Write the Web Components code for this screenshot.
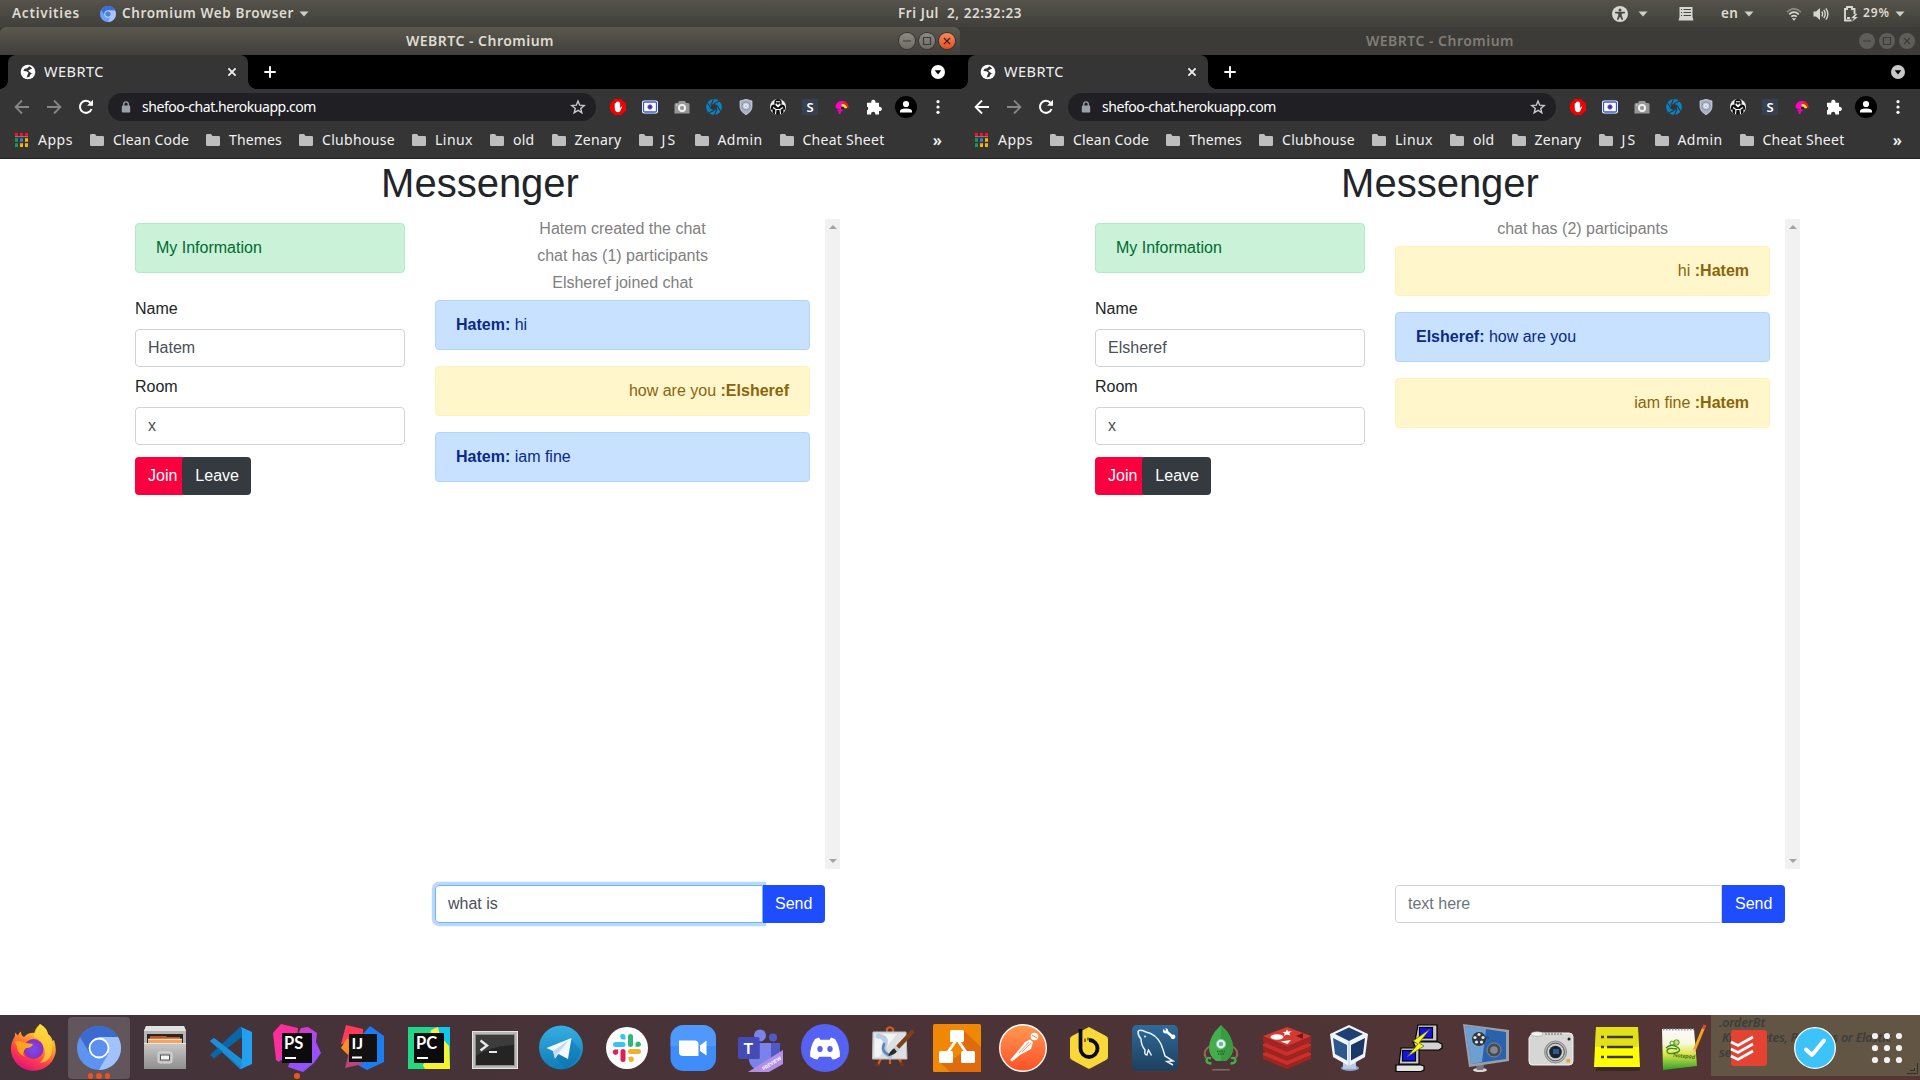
<!DOCTYPE html>
<html lang="en">
<head>
<meta charset="utf-8">
<title>WEBRTC</title>
<style>
html,body{margin:0;height:100%;overflow:hidden;background:#3c3b37}
body{font-family:"Noto Sans","Open Sans",sans-serif}
</style>
</head>
<body>
<desk-top></desk-top>
<script>
const define = (name, html, setup) => customElements.define(name, class extends HTMLElement {
  connectedCallback() {
    if (this.shadowRoot) return;
    const root = this.attachShadow({mode: 'open'});
    root.innerHTML = typeof html === 'function' ? html(this) : html;
    if (setup) setup(this, root);
  }
});

/* single-line label tracked so that it fills the width given in "w" */
define('fit-text', el => `<style>:host{display:inline-block;white-space:pre;flex:none;width:${el.getAttribute('w')}px}span{display:inline-block}</style><span><slot></slot></span>`,
  (el, root) => {
    const s = root.querySelector('span');
    const n = el.textContent.length;
    const d = (+el.getAttribute('w') - s.getBoundingClientRect().width) / n;
    s.style.letterSpacing = d.toFixed(3) + 'px';
  });

/* ---------- small icons ---------- */
const ICONS = {
  chromium: [16, `<circle cx="8" cy="8" r="8" fill="#6ea0f5"/><path d="M1.1 4A8 8 0 0 1 14.9 4L15 4.5H8L4.9 9.5Z" fill="#3c6fd6"/><path d="M15 4.5A8 8 0 0 1 8 16L11.2 9.6A3.6 3.6 0 0 0 8 4.4Z" fill="#a9c7fa"/><circle cx="8" cy="8" r="3.3" fill="#4a80ea" stroke="#dce8ff" stroke-width=".9"/>`],
  caret: [10, `<path d="M.5 2.6h9L5 7.4Z" fill="#d0cec8"/>`],
  access: [16, `<circle cx="8" cy="8" r="8" fill="#d8d6d0"/><circle cx="8" cy="3.9" r="1.5" fill="#4a4842"/><path d="M3 5.8h10v1.4l-3.3.6.2 2 1.2 3.6-1.3.5L8 10.7l-1.8 3.2-1.3-.5 1.2-3.6.2-2L3 7.2Z" fill="#4a4842"/>`],
  list: [16, `<path d="M1.500 1h13V11L15.500 14.500H.5L1.500 11Z" fill="#d8d6d0"/><path d="M3 3.500h1M5.500 3.500H13M3 6.500h1M5.500 6.500H13M3 9.500h1M5.500 9.500H13" stroke="#4a4842" stroke-width="1"/>`],
  wifi: [16, `<g fill="none" stroke-width="1.7"><path d="M1 6.1Q8-.6 15 6.1" stroke="#8b8881"/><path d="M3.2 8.4Q8 4 12.8 8.4" stroke="#d8d6d0"/><path d="M5.3 10.7Q8 8.4 10.7 10.7" stroke="#d8d6d0"/></g><path d="M5.8 12.2h4.4L8 14.8Z" fill="#d8d6d0"/>`],
  volume: [16, `<path d="M.5 5.5H3L7 2v12L3 10.5H.5Z" fill="#d8d6d0"/><g fill="none" stroke="#d8d6d0" stroke-width="1.4"><path d="M8.800 5.500q1.600 2.500 0 5M10.800 3.900q2.800 4.100 0 8.200M12.900 2.300q4 5.700 0 11.400"/></g>`],
  battery: [16, `<path d="M8.500 14.500H2V3h2V1h5v2h2.500v5" fill="none" stroke="#d8d6d0" stroke-width="1.900"/><path d="M4 11h3v2H4Z" fill="#d8d6d0"/><path d="M12.600 7.500 8 12.200h3.100L8.600 16 15 11h-3.200L14.300 8Z" fill="#d8d6d0"/>`],
  globe: [16, `<circle cx="8" cy="8" r="7.3" fill="#fff"/><path d="M9.200 2.200 7.300 4.300 4.600 4.700 3.400 7 6.500 7.300 8.400 8.600 7.800 10.300 6.600 13.600 9.600 12.700 10.200 10.800 12 9.500 9.600 8 8.200 6.600 10 5.500 12.300 4.500Z" fill="#333"/>`],
  close: [10, `<path d="M1.400 1.400 8.600 8.600M8.600 1.400 1.400 8.600" stroke="#f2f2f2" stroke-width="1.800"/>`],
  plus: [12, `<path d="M6 .3v11.400M.3 6h11.400" stroke="#fff" stroke-width="1.900"/>`],
  down: [14, `<circle cx="7" cy="7" r="7" fill="currentColor"/><path d="M3.700 5.200h6.600L7 9.400Z" fill="#000"/>`],
  back: [16, `<path d="M15 8H2M8 1.500 1.600 8 8 14.500" fill="none" stroke="currentColor" stroke-width="1.800"/>`],
  fwd: [16, `<path d="M1 8h13M8 1.500 14.400 8 8 14.500" fill="none" stroke="#868686" stroke-width="1.800"/>`],
  reload: [16, `<path d="M13.600 10A6 6 0 1 1 12.600 4" fill="none" stroke="#fff" stroke-width="2"/><path d="M15 .8V6.800H9Z" fill="#fff"/>`],
  lock: [12, `<rect x="1.800" y="4.600" width="8.400" height="7" rx=".8" fill="#9aa0a6"/><path d="M3.700 5V3.200a2.300 2.300 0 0 1 4.600 0V5" fill="none" stroke="#9aa0a6" stroke-width="1.300"/>`],
  star: [16, `<path d="M8 2 9.700 6.200l4.500.3-3.500 2.900 1.100 4.400L8 11.400l-3.800 2.400 1.100-4.400L1.800 6.500l4.500-.3Z" fill="none" stroke="#c8c9cc" stroke-width="1.400"/>`],
  adblock: [16, `<path d="M4.700 0h6.600L16 4.700v6.600L11.300 16H4.700L0 11.300V4.700Z" fill="#f40000"/><path d="M4.700 9V4.500q.9-.9 1.300 0V7V3.200q.8-1 1.400 0V6.500V2.700q.8-.9 1.400 0V7V3.600q.8-.8 1.300 0V9l1.300-1.500q1-.1.600.7L10 12.600Q8 14 6 12.600 4.700 11 4.700 9Z" fill="#fff"/>`],
  recorder: [16, `<rect x="0" y="1.500" width="16" height="13" rx="2.200" fill="#fff"/><rect x="1.500" y="3" width="13" height="10" rx="1.300" fill="#fff" stroke="#2d5be8" stroke-width="1.300"/><circle cx="8" cy="8" r="2.200" fill="#4a10c8" stroke="#7a6be8" stroke-width="1"/>`],
  camera: [16, `<path d="M5 2h6l1 2h2a1.500 1.500 0 0 1 1.500 1.500v9H.5v-9A1.500 1.500 0 0 1 2 4h2Z" fill="#979797"/><circle cx="8" cy="9" r="3.100" fill="#979797" stroke="#f4f4f4" stroke-width="1.900"/><circle cx="2.700" cy="6" r=".7" fill="#ddd"/>`],
  aperture: [16, `<circle cx="8" cy="8" r="7.900" fill="#0a82c4"/><path d="M8 4.600 11 6.300V9.700L8 11.400 5 9.700V6.300Z" fill="#333"/><path d="M8 4.600 13.500 2M11 6.300l3.500 6M11 9.700 8.500 16M8 11.400 2.500 14M5 9.700 1.500 3.700M5 6.300 7.500 0" stroke="#333" stroke-width="1.100"/>`],
  shield: [16, `<path d="M8 .3 14 2v5q0 5.500-6 8.700Q2 12.500 2 7V2Z" fill="#a9b0c6" stroke="#dfe3ef" stroke-width=".7"/><circle cx="8" cy="7" r="4" fill="#c6cbd9" stroke="#7b84a4" stroke-width=".8"/><circle cx="8" cy="7" r="1.700" fill="none" stroke="#eef" stroke-width=".9"/>`],
  spy: [16, `<circle cx="8" cy="8" r="8" fill="#eee"/><path d="M4.500 5.500Q3.500 0 8 0T11.500 5.500Z" fill="#111"/><path d="M1 7.500Q2 5 5 5.500L8 8.500 11 5.500Q14 5 15 7.500L15.300 11 13.500 10.500V14Q8 18 2.500 14V10.500L.7 11Z" fill="#111"/><path d="M5.500 15 6 10.500H10L10.500 15M3 8.500l3 2M13 8.500l-3 2M6 2.800h4M6.300 4.500v1.500L8 7.300 9.700 6V4.500" stroke="#fff" stroke-width="1.100" fill="none"/>`],
  ess: [16, `<rect width="16" height="16" fill="#36404f"/><text x="8" y="12.800" font-family="Noto Sans" font-size="13" font-weight="600" text-anchor="middle" fill="#fff">S</text>`],
  brush: [16, `<path d="M1.500 8A6.500 6.500 0 0 1 8 1.800Q11 1.800 12 3.500L8 8 7 10.500 2.500 9.500Z" fill="#ff00c8"/><path d="M3.500 10.500h5v1.800H6.700V15H4.800V12.300H3.500Z" fill="#ff00c8"/><path d="M8.500 3.200A6 6 0 0 1 13.800 9" fill="none" stroke="#f0201c" stroke-width="2.200"/><path d="M7.500 6.300Q11 5.500 12 9.300" fill="none" stroke="#ffdf1c" stroke-width="2.400"/><path d="M7 8.300q2.500-.2 3 1.800H7Z" fill="#1a1a1a"/>`],
  puzzle: [16, `<path d="M1 3.800h4.300a2.200 2.200 0 1 1 4.100 0H13v4a2.200 2.200 0 1 1 0 4.200V15.500H9.200a2.100 2.100 0 1 0-4 0H1v-4a2.200 2.200 0 0 0 0-3.900Z" fill="#fff"/>`],
  avatar: [22, `<circle cx="11" cy="11" r="11" fill="#000"/><circle cx="11" cy="8" r="3.100" fill="#fff"/><path d="M5 16.500V15q0-2.500 6-2.500t6 2.500v1.500Z" fill="#fff"/>`],
  dots: [16, `<g fill="#fff"><circle cx="8" cy="2.700" r="1.600"/><circle cx="8" cy="8" r="1.600"/><circle cx="8" cy="13.300" r="1.600"/></g>`],
  apps: [14, `<g><path d="M1 0h3v4H1ZM6 0h3v4H6ZM11 0h3v4h-3Z" fill="#f4102c"/><path d="M1 5.200h3v3.600H1ZM1 10.200h3V14H1Z" fill="#0f9d58"/><path d="M6 5.200h3v3.600H6Z" fill="#2b7de9"/><path d="M11 5.200h3v3.600h-3ZM6 10.200h3V14H6ZM11 10.200h3V14h-3Z" fill="#fbb208"/><path d="M1 3.200h13v.9H1Z" fill="#aaa" opacity=".7"/></g>`],
  folder: [14, `<path d="M0 2.300Q0 1 1.300 1H5l1.500 1.900h6.200Q14 2.900 14 4v7.700Q14 13 12.700 13H1.300Q0 13 0 11.700Z" fill="#bebebe"/>`]
};
define('ui-icon', el => {
  const [n, body] = ICONS[el.getAttribute('name')];
  const s = el.getAttribute('size') || n;
  return `<style>:host{display:inline-flex;flex:none;width:${s}px;height:${s}px}svg{display:block}</style><svg width="${s}" height="${s}" viewBox="0 0 ${n} ${n}">${body}</svg>`;
});

/* ---------- dock icons, 48 x 48 ---------- */
const T = (x, y, s, t) => `<text x="${x}" y="${y}" font-family="Lato" font-weight="700" font-size="${s}" fill="#fff">${t}</text>`;
const APPS = {
firefox: `<defs><linearGradient id="a" x1=".8" y1="0" x2=".3" y2="1"><stop offset="0" stop-color="#fff44f"/><stop offset=".35" stop-color="#ffa52a"/><stop offset=".7" stop-color="#ff3f4a"/><stop offset="1" stop-color="#e0107e"/></linearGradient><radialGradient id="b"><stop offset="0" stop-color="#7a4cf0"/><stop offset="1" stop-color="#8a2fc0"/></radialGradient></defs><path d="M31 0Q38 4 39 10q4 3 4.500 7l1.500-1q3 9 1 15A22.600 22.600 0 0 1 2 27Q1.500 19 6 12V8.500l3 3Q10 8.500 12 7.500q0 4 3 5.500Q20 8 26 9q1-5 5-9Z" fill="url(#a)"/><path d="M31 0q8 5 8 12 6 6 4 16-2 10-12 11 8-8 3-18-3-6-9-8-1-7 6-13Z" fill="#ffd83a" opacity=".75"/><circle cx="24.500" cy="25" r="10" fill="url(#b)"/><path d="M5 18q4-2 9 .5l10 1.500q-1 4-7 4-5 5-1 9-7-3-8-9 0-4-3-6Z" fill="#ffa31e"/>`,
chromium: `<circle cx="24" cy="24" r="22" fill="#5e93f0"/><path d="M5 13A22 22 0 0 1 43 13H24L14.500 29Z" fill="#3b6bd0"/><path d="M24 13H43A22 22 0 0 1 24 46L33.500 29.500Z" fill="#a1c2fa"/><circle cx="24" cy="24" r="9.500" fill="#5b90ef" stroke="#fff" stroke-width="1.800"/>`,
files: `<defs><linearGradient id="a" x2="0" y2="1"><stop offset="0" stop-color="#c9c9c9"/><stop offset="1" stop-color="#8e8e8e"/></linearGradient></defs><path d="M5 2h38l2 5v38H3V7Z" fill="#b5b5b5"/><path d="M5 2h38l2 5H3Z" fill="#e2e2e2"/><rect x="6" y="10" width="36" height="10" fill="#2b2522"/><path d="M9 12h16l1 1h13v7H8Z" fill="#c2561b"/><path d="M7 15h34v4H7Z" fill="#f2a569"/><path d="M7 14.700h34v1H7Z" fill="#fff0e0"/><rect x="3" y="19" width="42" height="26" fill="url(#a)"/><path d="M3 19h42v1H3Z" fill="#e6e6e6"/><rect x="17" y="28" width="14" height="11" rx="2" fill="#c0c0c0" stroke="#dcdcdc"/><rect x="19.500" y="31" width="9" height="5" fill="#f5f5f5" stroke="#555"/>`,
vscode: `<path d="M3 17 7 14 35 36V45L33 45Z" fill="#1482cc"/><path d="M3 31 7 34.500 35 13V3H33Z" fill="#0a66a6"/><path d="M3 17 7 14 35 35.500V44Z" fill="#1c8fdb"/><path d="M34 3 45 8V40L34 45 33 43.500 35 42V6Z" fill="#22a0ef"/>`,
phpstorm: `<defs><linearGradient id="a" x2=".6" y2="1"><stop offset="0" stop-color="#ff2d90"/><stop offset=".5" stop-color="#b545f0"/><stop offset="1" stop-color="#8a55ff"/></linearGradient></defs><path d="M0 9 8 0 25 4 24 12 6 38 3 36Z" fill="#fa2f9c"/><path d="M5 36 24 12 28 4 35 3 44 9 43 18 48 29 41 39 30 48 15 43 17 37Z" fill="url(#a)"/><rect x="9" y="9" width="30" height="30" fill="#0b0b0b"/>${T(11,25,16.5,'PS')}<rect x="12" y="33" width="11" height="2" fill="#fff"/>`,
intellij: `<path d="M7 1 24 5 24 18 2 20Z" fill="#fe3b5c"/><path d="M2 24 8 14 18 24 10 32Z" fill="#f98c25"/><path d="M31 2 45 12V38L28 46 17 40 24 10Z" fill="#1a7df0"/><path d="M10 28 6 44 24 40 20 24Z" fill="#b8457e"/><rect x="10" y="10" width="28" height="28" fill="#111"/>${T(12.5,25,16,'IJ')}<rect x="13" y="32.500" width="10" height="2" fill="#fff"/>`,
pycharm: `<rect x="3" y="3" width="42" height="42" fill="#20d68b"/><path d="M25 3H45V28L34 20Z" fill="#12c5ea"/><path d="M26 6 33 3 35 12 44 22 45 45H15L20 38Z" fill="#f5f32e"/><path d="M3 40 12 30 20 45H3Z" fill="#23d97c"/><rect x="9" y="9" width="30" height="30" fill="#0b0b0b"/>${T(11,25,16.5,'PC')}<rect x="12" y="33" width="11" height="2" fill="#fff"/>`,
terminal: `<rect x="1.500" y="7.500" width="45" height="37" fill="#b9b9b7" stroke="#e6e6e4"/><rect x="4" y="10" width="40" height="32" fill="#8b8b89"/><rect x="5" y="11" width="38" height="30" fill="#242424"/><path d="M5 11h38v10Q20 22 5 32Z" fill="#3c3c3c"/><path d="M9.500 16.500 16 21.500 9.500 26.500" fill="none" stroke="#e8e8e8" stroke-width="2.400"/><path d="M18 28h8" stroke="#e8e8e8" stroke-width="2"/>`,
telegram: `<defs><linearGradient id="a" x2="0" y2="1"><stop offset="0" stop-color="#37aee2"/><stop offset="1" stop-color="#0d7db8"/></linearGradient></defs><circle cx="24" cy="23.500" r="22" fill="url(#a)"/><path d="M34 15 44 27Q40 40 28 45L19 33Z" fill="#0b6fa8" opacity=".4"/><path d="M9.500 24 34.500 14 31 35 21.500 30 18 34.500 16 27Z" fill="#f4f8fb"/><path d="M16 27 32 16 21 29.500 18 34.500Z" fill="#c3dbea"/>`,
slack: `<circle cx="24" cy="24" r="21" fill="#fff"/><g stroke-width="5" stroke-linecap="round"><path d="M12.500 20.500H20" stroke="#36c5f0"/><path d="M27.500 12.500V20.500" stroke="#2eb67d"/><path d="M35.500 27.500H27.500" stroke="#ecb22e"/><path d="M20 35.500V27.500" stroke="#e01e5a"/></g><path d="M22.500 15.500H20a2.700 2.700 0 1 1 2.500-3Z" fill="#36c5f0"/><path d="M32.500 22.800V20a2.700 2.700 0 1 1 3 2.800Z" fill="#2eb67d"/><path d="M25.500 32.700H27.500a2.700 2.700 0 1 1-2 3Z" fill="#ecb22e"/><path d="M15.200 25.500V28a2.700 2.700 0 1 1-3-2.500Z" fill="#e01e5a"/>`,
zoom: `<rect x="1.500" y="1" width="45.500" height="46" rx="13" fill="#3f8cfb"/><path d="M1.500 14A13 13 0 0 1 14.500 1h19.500a13 13 0 0 1 13 13v8H1.500Z" fill="#5aa0fd" opacity=".6"/><path d="M10 16.500h15.500a4 4 0 0 1 4 4V32H14a4 4 0 0 1-4-4Z" fill="#fff"/><path d="M31 21.500 37.500 16.500V31.500L31 27Z" fill="#fff"/>`,
teams: `<circle cx="25" cy="11.500" r="6" fill="#7b83eb"/><circle cx="38" cy="13.500" r="4" fill="#5059c9"/><path d="M31 19h14v14a8 8 0 0 1-14 4Z" fill="#5059c9"/><path d="M14 19h22v16a11 11 0 0 1-22 0Z" fill="#7b83eb"/><path d="M14 19h11v16H15Z" fill="#4a51b0" opacity=".6"/><rect x="3" y="13" width="21.500" height="22" rx="2" fill="#444bb4"/>${T(8.5,29.5,16,'T')}<path d="M13 48 48 26V40L34 48Z" fill="#b38fe6"/><text transform="translate(28.500 46.500) rotate(-32)" font-family="Lato" font-weight="900" font-size="4.800" fill="#fff">PREVIEW</text>`,
discord: `<circle cx="24" cy="24" r="24" fill="#5562f3"/><path d="M18 13.500 14 15Q9 22.500 9 32.500q4 3 7.500 3l1.700-2.800h11.600l1.700 2.800q3.500 0 7.500-3Q39 22.500 34 15l-4-1.500-1.300 2.200h-9.400Z" fill="#fff"/><ellipse cx="19" cy="25" rx="2.700" ry="3" fill="#5562f3"/><ellipse cx="29" cy="25" rx="2.700" ry="3" fill="#5562f3"/>`,
paint: `<path d="M20 8V5q2.500-3.500 6 0v3M14 34 11 41M32 34l3 7M23 34v6" stroke="#d65a20" stroke-width="2.200" fill="none"/><path d="M10 38l-2 4h5ZM32 38l2 4h4l-3-4Z" fill="#7a3513"/><path d="M6 8H39L40 35H5.500Z" fill="#dddfe0" stroke="#bcbebf"/><path d="M8 10H30L12 33H7.500Z" fill="#f2f3f3"/><path d="M11 12q9 1 7 8-4 8 5 12" stroke="#a9c2de" stroke-width="5" fill="none" opacity=".8" stroke-linecap="round"/><path d="M17 20q-3 8 5 11" stroke="#5f86b5" stroke-width="2.500" fill="none" stroke-linecap="round"/><path d="M45 8 31 23" stroke="#7c411c" stroke-width="4.200" stroke-linecap="round"/><path d="M27.500 24l3 3q-3 4-9 5 1-5 6-8Z" fill="#2a2a2c"/><path d="M29 21.500l4 4-3 2.500-3-4Z" fill="#ccc"/>`,
drawio: `<rect width="48" height="48" rx="1.500" fill="#f08705"/><path d="M30 6 48 23V48H17L7 38 19 36 30 28Z" fill="#df6c0c"/><path d="M24 15 13 31M24 15 35 31" stroke="#fff" stroke-width="2.800"/><rect x="17" y="6" width="14" height="12" rx="1.500" fill="#fff"/><rect x="6" y="27" width="14" height="12" rx="1.500" fill="#fff"/><rect x="28" y="27" width="14" height="12" rx="1.500" fill="#fff"/>`,
postman: `<defs><linearGradient id="a" x2="0" y2="1"><stop offset="0" stop-color="#ff9a52"/><stop offset="1" stop-color="#ff5026"/></linearGradient></defs><circle cx="24" cy="24" r="23.300" fill="url(#a)" stroke="#fff" stroke-width="1.400"/><circle cx="35.500" cy="12.500" r="3.800" fill="#fff"/><path d="M33 11l5 3" stroke="#ff7a45" stroke-width="1"/><path d="M31 15.500 34 18 32 25 21 31 13 37.500 11 36 23 22 26 18Z" fill="#fff"/><path d="M30 18 20 29M32 19 23 28" stroke="#ff7b40" stroke-width=".8"/>`,
beekeeper: `<path d="M24 3 41 12Q43 13 43 15V33Q43 35 41 36L26 44Q24 45.500 22 44L7 36Q5 35 5 33V15Q5 13 7 12L22 4Z" fill="#fbd83a"/><path d="M15.500 5V24.500a8.500 8.500 0 1 0 8.500-8.500" fill="none" stroke="#0a0a0a" stroke-width="3.800"/><path d="M20 14.500v3.500M23 13.500v3" stroke="#0a0a0a" stroke-width="1"/>`,
mysql: `<defs><linearGradient id="a" x2="0" y2="1"><stop offset="0" stop-color="#306a9c"/><stop offset="1" stop-color="#1d3f5c"/></linearGradient></defs><rect x="1" y="1" width="46" height="46" rx="5" fill="url(#a)"/><path d="M7 7Q10 5 15 8q10 2 15 12 2 5 4 12l8 5-6 .5L42 41M7 7q0 5 3 8 0 6 4 11-1 5 2 5 .5-3 1.500-5l3 5.500" fill="none" stroke="#e8f2f8" stroke-width="1.500"/><circle cx="14" cy="12.500" r=".9" fill="#fff"/><path d="M35 7 43 14" stroke="#fff" stroke-width="2.600"/><circle cx="34.500" cy="6.800" r="2.600" fill="#fff"/><circle cx="42" cy="12.800" r="2.400" fill="#fff"/><path d="M33 4l1.500 2.500" stroke="#306a9c" stroke-width="1.500"/>`,
robo: `<path d="M13 22Q5 27 9 34M35 22Q43 27 39 34" fill="none" stroke="#8f6b58" stroke-width="2"/><path d="M24 1Q36 12 36 24q0 8-7 13H19q-7-5-7-13Q12 12 24 1Z" fill="#45ae4c"/><path d="M24 1Q36 12 36 24q0 8-7 13h-5Z" fill="#3a9c42"/><circle cx="24" cy="20" r="4.600" fill="#eaf7f2" stroke="#8ccfa0"/><circle cx="24" cy="20" r="2.300" fill="#6ab9a5"/><path d="M20 27.500h8M21 30h6" stroke="#1f6b2a" stroke-dasharray="1.500 .7" stroke-width="1.600"/><path d="M14 34.500q-4-2-4.500 2 .5 3 5 3M34 34.500q4-2 4.500 2-.5 3-5 3" fill="none" stroke="#45ae4c" stroke-width="2.400"/><rect x="15" y="45" width="18" height="1.500" rx=".7" fill="#7f6b6a"/>`,
redis: `<g stroke-linejoin="round"><path d="M0 31 24 22 48 31V35L24 45 0 35Z" fill="#9e2420"/><path d="M0 29 24 20 48 29V31L24 41 0 31Z" fill="#c9302b"/><path d="M0 23 24 14 48 23V27L24 37 0 27Z" fill="#9e2420"/><path d="M0 20 24 11 48 20V22L24 32 0 22Z" fill="#c9302b"/><path d="M0 13 24 3 48 13V18L24 28 0 18Z" fill="#a32422"/><path d="M0 12 24 3 48 12 24 22Z" fill="#d23a33"/></g><path d="M24 5.500l1.300 2 3.500-.2-2.500 2 1 2.200-3.300-1-3 1.200.7-2.300-2.200-1.500 3.300-.2Z" fill="#fff"/><ellipse cx="14" cy="13" rx="6.500" ry="2.800" fill="#fff"/><path d="M17.500 17.500 28 16 24.500 20Z" fill="#fff"/><path d="M33 12 40 9V15Z" fill="#7a1612"/>`,
vbox: `<ellipse cx="21" cy="44" rx="9" ry="3" fill="#8ea3c8"/><path d="M14 38h13v7H14Z" fill="#b9c8e4"/><path d="M20 1 39 10 36 33 20 42 4 33 1 10Z" fill="#f0f4fb"/><path d="M20 3.500 34 10 20 17 6 10Z" fill="#1d3f73"/><path d="M4 14 18 21V36.500L6 30Z" fill="#2e588c"/><path d="M36 14 22 21V36.500L34 30Z" fill="#1a3867"/><path d="M20 17V42" stroke="#c8d5ee" stroke-width="1.500"/>`,
putty: `<g stroke="#000" stroke-width="1.200"><path d="M20 17 23 1H42V17Z" fill="#c9c9c9"/><rect x="24.500" y="3.500" width="13" height="10.500" fill="#1212f0"/><path d="M18 18H43l4 2v4l-3 2H22Z" fill="#d4d4d4"/><path d="M4 40 6 24H24V40Z" fill="#c9c9c9"/><rect x="7.500" y="26.500" width="13" height="10.500" fill="#1212f0"/><path d="M1 41H26l3 1v4l-3 1.500H1Z" fill="#e2e2e2"/></g><path d="M35 5 18 17 23 20 12 33 29 22 24 19Z" fill="#f6f61a" stroke="#5a5a00" stroke-width=".7"/>`,
media: `<ellipse cx="19" cy="46" rx="7" ry="2" fill="#d8d8d8"/><path d="M15 41h8l-1 5h-6Z" fill="#777"/><path d="M2 0 48 6 48 37 8 43Z" fill="#9aa0a8"/><path d="M4 2 45 8 45 35 10 40Z" fill="#2a62ae"/><path d="M4 2 25 5 21 38 10 40Z" fill="#86b4dc" opacity=".75"/><circle cx="18" cy="15" r="7" fill="#34363a"/><g fill="#dfe6ec"><circle cx="18" cy="10.500" r="1.600"/><circle cx="22" cy="13.500" r="1.600"/><circle cx="20.500" cy="18" r="1.600"/><circle cx="15.500" cy="18" r="1.600"/><circle cx="14" cy="13.500" r="1.600"/></g><path d="M24 15q3-3 4-1" stroke="#333" fill="none"/><circle cx="33" cy="26" r="7" fill="#484a4f" stroke="#85888d"/><circle cx="33" cy="26" r="3.800" fill="#85898e"/>`,
shot: `<path d="M4 11q2-4 12-2h26q4 0 4 4v24q0 4-4 4H5q-3 0-3-4V14Z" fill="#d6d6d4" stroke="#f4f4f2"/><ellipse cx="10" cy="10" rx="6" ry="2.300" fill="#f3f3f1" stroke="#999" stroke-width=".6"/><path d="M18 10h17" stroke="#666" stroke-dasharray="2 1"/><circle cx="28.500" cy="28" r="11" fill="#b5b5b3" stroke="#8f8f8d"/><circle cx="28.500" cy="28" r="8.800" fill="#d0d0ce" stroke="#55575a"/><circle cx="28.500" cy="28" r="6.300" fill="#1a2430"/><rect x="26" y="25" width="6" height="5" fill="#2c5a8c"/><circle cx="42" cy="15" r="1.500" fill="#222"/><rect x="39.500" y="35" width="3.500" height="3.500" fill="#eea035"/>`,
notes: `<path d="M3 43h44v4H3Z" fill="#2a1f1f" opacity=".6"/><path d="M3 3H45L47 43H1Z" fill="#ffff00"/><path d="M3 3H45V23H2.500Z" fill="#e3e017"/><path d="M8 13h3M14 13h26M8 23h3M14 23h26M8 33h3M14 33h26" stroke="#3c3a30" stroke-width="2.600"/>`,
notepad: `<defs><linearGradient id="a" x2="0" y2="1"><stop offset="0" stop-color="#fbfbfb"/><stop offset=".35" stop-color="#f6f8dc"/><stop offset=".6" stop-color="#dfe94a"/><stop offset="1" stop-color="#2fa02a"/></linearGradient></defs><path d="M3 5H35L38 42 4 46Z" fill="url(#a)"/><path d="M4 5.500h31" stroke="#999" stroke-width="2" stroke-dasharray="1.500 1.500"/><path d="M7 24q5-5 11-1t-2 6-8-2 10-2" fill="none" stroke="#3c8a20" stroke-width="1.300"/><circle cx="17.500" cy="18.500" r="2.700" fill="#c4e266" stroke="#377b1e" stroke-width=".8"/><circle cx="13" cy="19" r="2" fill="#e6f4b0" stroke="#377b1e" stroke-width=".8"/><text x="14" y="33" font-family="Lato" font-style="italic" font-size="6" font-weight="700" fill="#4d6420" transform="rotate(5 14 33)">Notepad</text><path d="M44.500 4 35 27" stroke="#f5a21c" stroke-width="3"/><path d="M46 1 44.300 5" stroke="#d94a3c" stroke-width="3"/><path d="M35.700 25 33.500 30" stroke="#e8cda0" stroke-width="1.800"/>`,
todoist: `<rect x="6" y="6" width="36" height="36" rx="3" fill="#e44332"/><path d="M6 18 13 21.500 28 13M6 25 13 28.500 28 20M6 32 13 35.500 28 27" fill="none" stroke="#fff" stroke-width="2.700"/>`,
tasks: `<circle cx="24" cy="24" r="20.300" fill="#3cc3fb" stroke="#fff" stroke-width="1.300"/><path d="M15 25.500 21 31 33 16.500" fill="none" stroke="#fff" stroke-width="4" stroke-linecap="round" stroke-linejoin="round"/>`,
grid: `<g fill="#f2f2f2">${[12,24,36].map(y=>[12,24,36].map(x=>`<circle cx="${x}" cy="${y}" r="3.100"/>`).join('')).join('')}</g>`
};
define('dock-app', el => {
  const n = +el.getAttribute('dots') || 0;
  return `<style>:host{display:flex;flex:none;width:66px;height:65px;box-sizing:border-box;padding:2px 2px 1px}
  .box{position:relative;width:62px;height:62px;border-radius:4px;display:flex;justify-content:center;padding-top:7px;box-sizing:border-box}
  :host([active]) .box{background:rgba(255,255,255,.17)}
  .dots{position:absolute;left:0;right:0;bottom:0;display:flex;justify-content:center;gap:3px}
  .dots i{width:5.600px;height:5.600px;border-radius:50%;background:#e95420}</style>
  <div class="box"><svg width="48" height="48" viewBox="0 0 48 48">${APPS[el.getAttribute('app')]}</svg><div class="dots">${'<i></i>'.repeat(n)}</div></div>`;
});

define('top-bar', `<style>
:host{display:grid;grid-template-columns:1fr auto 1fr;align-items:center;height:27px;background:linear-gradient(#55534b,#403f3a);color:#dfdbd2;font-size:13.500px;font-weight:600;line-height:26px}
.l{display:flex;align-items:center;padding-left:12px}.r{display:flex;align-items:center;justify-content:flex-end;padding-right:15px}
fit-text{height:27px}</style>
<div class="l"><fit-text w="68">Activities</fit-text><ui-icon name="chromium" style="margin:0 6px 0 20px"></ui-icon><fit-text w="172">Chromium Web Browser</fit-text><ui-icon name="caret" style="margin-left:5px"></ui-icon></div>
<fit-text w="124">Fri Jul  2, 22:32:23</fit-text>
<div class="r"><ui-icon name="access"></ui-icon><ui-icon name="caret" style="margin:0 30px 0 10px"></ui-icon><ui-icon name="list"></ui-icon><fit-text w="17" style="margin:0 6px 0 27px">en</fit-text><ui-icon name="caret"></ui-icon><ui-icon name="wifi" style="margin-left:32px"></ui-icon><ui-icon name="volume" style="margin:0 14px 0 11px"></ui-icon><ui-icon name="battery"></ui-icon><fit-text w="27" style="font-size:12px;margin:0 5px 0 4px">29%</fit-text><ui-icon name="caret"></ui-icon></div>`);

define('title-bar', `<style>
:host{display:grid;grid-template-columns:1fr auto 1fr;align-items:center;height:28px;background:linear-gradient(#5b584f,#403f3a);border-radius:6px 6px 0 0;color:#dfdbd2;font-size:14px;font-weight:600;line-height:28px;box-sizing:border-box}
:host([inactive]){background:#3c3b37;color:#807d78}
.b{display:flex;gap:4px;justify-content:flex-end;padding-right:5px}
.b svg{width:16px;height:16px;border-radius:50%;background:linear-gradient(#8c8a82,#6d6b64);color:#3a3935;box-shadow:0 0 0 1px #35342f}
.b svg:last-child{background:linear-gradient(#f58a63,#e2511d);color:#4a1c08}
:host([inactive]) .b svg{background:#5f5d58;color:#3c3b37;box-shadow:none}
path{fill:none;stroke:currentColor;stroke-width:1.200}</style><span></span><fit-text w="148">WEBRTC - Chromium</fit-text>
<div class="b"><svg viewBox="0 0 16 16"><path d="M4 8h8"/></svg><svg viewBox="0 0 16 16"><path d="M4.500 4.500h7v7h-7Z"/></svg><svg viewBox="0 0 16 16"><path d="M5 5l6 6M11 5l-6 6"/></svg></div>`);

define('tab-strip', el => `<style>
:host{display:flex;height:34px;background:#000;align-items:center;color:#f1f1f1;font-size:14.500px;line-height:20px;box-sizing:border-box;padding:0 15px 0 8px}
.tab{position:relative;width:240px;height:34px;background:#353535;border-radius:8px 8px 0 0;display:flex;align-items:center;padding:0 11px 0 12px;box-sizing:border-box;gap:8px}
.tab:before,.tab:after{content:"";position:absolute;bottom:0;width:8px;height:8px;background:radial-gradient(circle at 0 0,transparent 7.500px,#353535 8px)}
.tab:before{left:-8px}.tab:after{right:-8px;background:radial-gradient(circle at 100% 0,transparent 7.500px,#353535 8px)}
fit-text{margin-bottom:2px}
.grow{flex:1}</style>
<div class="tab"><ui-icon name="globe"></ui-icon><fit-text w="60">WEBRTC</fit-text><span class="grow"></span><ui-icon name="close"></ui-icon></div>
<ui-icon name="plus" style="margin-left:16px"></ui-icon><span class="grow"></span><ui-icon name="down" style="color:${el.hasAttribute('inactive')?'#c8c8c8':'#fff'}"></ui-icon>`);

define('tool-bar', el => `<style>
:host{display:flex;height:36px;align-items:center;padding:0 14px;color:#fff;font-size:14px;line-height:20px;box-sizing:border-box}
.omni{width:488px;height:28px;border-radius:14px;background:#202024;display:flex;align-items:center;box-sizing:border-box;padding:0 10px 0 12px;margin:0 14px 0 14px}
.grow{flex:1}.ext{display:flex;gap:16px;align-items:center;flex:1}</style>
<ui-icon name="back" style="color:${el.hasAttribute('back')?'#fff':'#868686'}"></ui-icon><ui-icon name="fwd" style="margin:0 16px"></ui-icon><ui-icon name="reload"></ui-icon>
<div class="omni"><ui-icon name="lock"></ui-icon><fit-text w="174" style="margin-left:10px">shefoo-chat.herokuapp.com</fit-text><span class="grow"></span><ui-icon name="star"></ui-icon></div>
<div class="ext">${['adblock','recorder','camera','aperture','shield','spy','ess','brush','puzzle'].map(n=>`<ui-icon name="${n}"></ui-icon>`).join('')}<ui-icon name="avatar" style="margin:0 -3px"></ui-icon><ui-icon name="dots"></ui-icon></div>`);

define('bookmark-bar', `<style>
:host{display:flex;height:34px;align-items:center;padding:0 18px 3px 14px;border-bottom:1px solid #222;color:#f1f1f1;font-size:14px;line-height:30px;box-sizing:border-box}
.i{display:flex;align-items:center;gap:9px;margin-right:17px;flex:none}.grow{flex:1}.more{font-size:16px;font-weight:600}</style>
<div class="i" style="gap:10px"><ui-icon name="apps"></ui-icon><fit-text w="35">Apps</fit-text></div>
${[['Clean Code',76],['Themes',53],['Clubhouse',73],['Linux',38],['old',21.5],['Zenary',47],['JS',16],['Admin',45],['Cheat Sheet',82]].map(([t,w])=>`<div class="i"><ui-icon name="folder"></ui-icon><fit-text w="${w}">${t}</fit-text></div>`).join('')}
<span class="grow"></span><span class="more">»</span>`);

define('form-field', el => `<style>
:host{display:block;margin-bottom:8px}label{display:block;margin-bottom:8px;line-height:24px;height:24px;padding-top:0}
.in{border:1px solid #ced4da;border-radius:4px;height:38px;box-sizing:border-box;padding:6px 12px;line-height:24px;color:#495057}</style>
<label>${el.getAttribute('label')}</label><div class="in"><slot></slot></div>`);

define('chat-note', `<style>:host{display:block;height:27px;line-height:19px;text-align:center;color:#808080}</style><slot></slot>`);
define('alert-box', `<style>:host{display:block;height:50px;box-sizing:border-box;border:1px solid #b0d4ff;background:#c7e1ff;color:#0a2a86;border-radius:4px;padding:12px 20px;line-height:24px;margin-bottom:16px}
:host([kind=success]){background:#c9f2d9;border-color:#b3ebc9;color:#006b2e;margin-bottom:24px}
:host([kind=other]){background:#fff6cc;border-color:#fff2b8;color:#8a6508;text-align:right}</style><slot></slot>`);

define('chat-page', el => {
  const focus = el.hasAttribute('focus');
  return `<style>
:host{display:flex;flex-direction:column;background:#fff;color:#212529;font:16px/24px "Liberation Sans",Arial,sans-serif;flex:1;min-height:0}
h1{margin:0;font-size:40px;font-weight:500;line-height:48px;height:60px;text-align:center}
.cols{display:flex;padding:0 120px 0 135px;gap:30px;align-items:flex-start}
.side{width:270px;padding-top:4px}.main{width:405px}
.btns{display:flex;margin-top:12px}.btn{height:38px;padding:7px 13px;line-height:24px;border-radius:4px;box-sizing:border-box;color:#fff}
.join{background:#f9003f;margin-right:-8px}.leave{background:#343a40;position:relative;width:69px}
.chat{display:flex;height:650px;margin-bottom:16px}.log{flex:1;padding-right:15px}
.bar{width:15px;background:#f1f1f1;display:flex;flex-direction:column;justify-content:space-between;align-items:center;padding:6px 0;box-sizing:border-box}
.bar svg{display:block}
.send{display:flex;width:390px}.in{flex:1;height:38px;box-sizing:border-box;border:1px solid #ced4da;border-radius:4px 0 0 4px;padding:6px 12px;color:#6c757d}
.focus{border-color:#75b1fb;box-shadow:0 0 0 3.200px #b8d9ff;color:#495057}
.go{background:#1e4cff;border-radius:0 4px 4px 0;position:relative;width:${focus?62:63}px;padding:7px 13px 7px ${focus?12:13}px}</style>
<h1>Messenger</h1>
<div class="cols"><div class="side"><alert-box kind="success">My Information</alert-box>
<form-field label="Name">${el.getAttribute('user')}</form-field><form-field label="Room">x</form-field>
<div class="btns"><div class="btn join">Join</div><div class="btn leave">Leave</div></div></div>
<div class="main"><div class="chat"><div class="log"><slot></slot></div><div class="bar"><svg width="8" height="4"><path d="M0 4 4 0 8 4Z" fill="#a3a3a3"/></svg><svg width="8" height="4"><path d="M0 0 4 4 8 0Z" fill="#a3a3a3"/></svg></div></div>
<div class="send"><div class="in ${focus?'focus':''}">${focus?'what is':'text here'}</div><div class="btn go">Send</div></div></div></div>`;
});

define('browser-window', el => {
  const off = el.hasAttribute('inactive');
  return `<style>:host{display:flex;flex-direction:column;width:960px;height:988px}.chrome{background:#353535}</style>
<title-bar ${off?'inactive':''}></title-bar><div class="chrome"><tab-strip ${off?'inactive':''}></tab-strip><tool-bar ${off?'back':''}></tool-bar><bookmark-bar></bookmark-bar></div>
<chat-page user="${el.getAttribute('user')}" ${off?'':'focus'}><slot></slot></chat-page>`;
});

define('sticky-note', `<style>:host{position:absolute;left:1711px;top:0;width:209px;height:61px;background:#625543;color:#3d3d3a;font-size:12.500px;font-weight:600;font-style:italic;line-height:15px;box-sizing:border-box;padding:0 0 0 8px;overflow:hidden}
div{height:15px}svg{position:absolute;right:2px;bottom:2px}</style><div><fit-text w="46">.orderBt</fit-text></div><div><fit-text w="172"> Kubernetes, Postgres or Elastic</fit-text></div><div><fit-text w="36">search</fit-text></div>
<svg width="11" height="11"><path d="M10.500 0V10.500H0M7.500 5V7.500H3" fill="none" stroke="#2f2f2c"/></svg>`);

define('app-dock', `<style>:host{display:flex;position:relative;height:65px;background:linear-gradient(90deg,#42333a,#4b3337 50%,#563635)}
dock-app{position:relative}dock-app[app=grid]{margin-left:6px}</style><sticky-note></sticky-note>
${Object.keys(APPS).map(a=>`<dock-app app="${a}" ${a==='chromium'?'active dots="3"':a==='phpstorm'?'dots="1"':''}></dock-app>`).join('')}`);

define('desk-top', `<style>:host{display:flex;flex-direction:column;width:1920px;height:1080px;overflow:hidden;background:#3c3b37}.w{display:flex}</style>
<top-bar></top-bar>
<div class="w"><browser-window user="Hatem"><chat-note>Hatem created the chat</chat-note><chat-note>chat has (1) participants</chat-note><chat-note>Elsheref joined chat</chat-note>
<alert-box><b>Hatem:</b> hi</alert-box><alert-box kind="other">how are you <b>:Elsheref</b></alert-box><alert-box><b>Hatem:</b> iam fine</alert-box></browser-window>
<browser-window user="Elsheref" inactive><chat-note>chat has (2) participants</chat-note>
<alert-box kind="other">hi <b>:Hatem</b></alert-box><alert-box><b>Elsheref:</b> how are you</alert-box><alert-box kind="other">iam fine <b>:Hatem</b></alert-box></browser-window></div>
<app-dock></app-dock>`);
</script>
</body>
</html>
